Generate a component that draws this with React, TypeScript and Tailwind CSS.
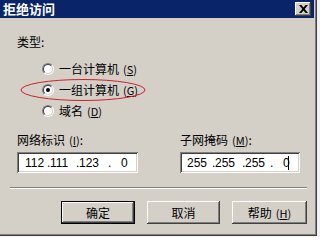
import React from 'react'

const cjk = "font-['SimSun','Noto_Sans_CJK_SC',sans-serif]"

function Radio({ checked }: { checked?: boolean }) {
  return (
    <div className="w-[12px] h-[12px] rounded-full border border-t-[#808080] border-l-[#808080] border-b-white border-r-white">
      <div className="w-full h-full rounded-full border border-t-[#404040] border-l-[#404040] border-b-[#d4d0c8] border-r-[#d4d0c8] bg-white flex items-center justify-center">
        {checked && <div className="w-[4px] h-[4px] rounded-full bg-black" />}
      </div>
    </div>
  )
}

function Accel({ ch }: { ch: string }) {
  return (
    <span className="ml-[4px] text-[11px]">
      (<span className="underline underline-offset-1">{ch}</span>)
    </span>
  )
}

function RadioRow({ label, ch, checked }: { label: string; ch: string; checked?: boolean }) {
  return (
    <div className="h-[21px] flex items-center gap-[5px]">
      <Radio checked={checked} />
      <span className="flex items-center">
        {label}
        <Accel ch={ch} />
      </span>
    </div>
  )
}

// each octet: [field width, text]
type Octet = [number, string]

function IpBox({ octets, pad, caret }: { octets: Octet[]; pad: number; caret?: boolean }) {
  return (
    <div
      className="h-[21px] bg-white flex items-center shadow-[inset_1px_1px_0_#808080,inset_-1px_-1px_0_#fff,inset_2px_2px_0_#404040,inset_-2px_-2px_0_#d4d0c8] font-['Liberation_Sans',sans-serif] text-[12px] text-black"
      style={{ paddingLeft: pad }}
    >
      {octets.map(([w, t], i) => (
        <React.Fragment key={i}>
          <span className="whitespace-pre" style={{ width: w }}>
            {t}
          </span>
          {i < octets.length - 1 && <span className="w-[3px]">.</span>}
        </React.Fragment>
      ))}
      {caret && <span className="w-px h-[14px] bg-black ml-[1px]" />}
    </div>
  )
}

function Btn({ children, isDefault }: { children: React.ReactNode; isDefault?: boolean }) {
  return (
    <button
      type="button"
      className={
        'h-[23px] flex items-center justify-center text-[12px] text-black ' +
        (isDefault
          ? 'border border-black shadow-[inset_-1px_-1px_0_#404040,inset_1px_1px_0_#fff,inset_-2px_-2px_0_#808080]'
          : 'shadow-[inset_-1px_-1px_0_#404040,inset_1px_1px_0_#fff,inset_-2px_-2px_0_#808080,inset_2px_2px_0_#d4d0c8]')
      }
    >
      {children}
    </button>
  )
}

export default function App() {
  return (
    <div className={`w-[320px] h-[237px] bg-[#f2f2f2] ${cjk} text-[12px] leading-[14px] text-black`}>
      <div className="relative w-[317px] h-[236px] bg-[#d4d0c8] shadow-[inset_-1px_-1px_0_#404040,inset_-2px_-2px_0_#808080] pr-[3px]">
        {/* title bar */}
        <div className="h-[18px] bg-[#0a246a] flex items-center justify-between pl-[3px] pr-[3px]">
          <span className="text-white font-bold text-[13px] leading-[18px]">拒绝访问</span>
          <div className="w-[16px] h-[14px] bg-[#d4d0c8] flex items-center justify-center shadow-[inset_-1px_-1px_0_#404040,inset_1px_1px_0_#fff,inset_-2px_-2px_0_#808080]">
            <svg width="9" height="8" viewBox="0 0 9 8">
              <path d="M0 0h2.4l2.1 2.6L6.6 0H9L5.7 4 9 8H6.6L4.5 5.4 2.4 8H0l3.3-4z" fill="#000" />
            </svg>
          </div>
        </div>

        <div className="pt-[17px] pl-[17px]">
          <div>类型:</div>
          <div className="pl-[25px] mt-[9px]">
            <RadioRow label="一台计算机" ch="S" />
            <RadioRow label="一组计算机" ch="G" checked />
            <RadioRow label="域名" ch="D" />
          </div>

          <div className="flex gap-[42px] mt-[12px]">
            <div className="w-[121px]">
              <div className="flex items-center">
                网络标识<Accel ch="I" />:
              </div>
              <div className="mt-[5px]">
                <IpBox
                  pad={8}
                  octets={[
                    [22, '112'],
                    [26, '111'],
                    [29, '123'],
                    [12, '   0'],
                  ]}
                />
              </div>
            </div>
            <div className="w-[120px]">
              <div className="flex items-center">
                子网掩码<Accel ch="M" />:
              </div>
              <div className="mt-[5px]">
                <IpBox
                  pad={7}
                  caret
                  octets={[
                    [25, '255'],
                    [27, '255'],
                    [25, '255'],
                    [14, '   0'],
                  ]}
                />
              </div>
            </div>
          </div>
        </div>

        <div className="ml-[10px] mr-[7px] mt-[14px] border-t border-t-[#808080] border-b border-b-white" />

        <div className="flex gap-[12px] pl-[61px] mt-[12px]">
          <div className="w-[74px] flex flex-col">
            <Btn isDefault>确定</Btn>
          </div>
          <div className="w-[73px] flex flex-col">
            <Btn>取消</Btn>
          </div>
          <div className="w-[75px] flex flex-col">
            <Btn>
              帮助<Accel ch="H" />
            </Btn>
          </div>
        </div>

        {/* red highlight ellipse */}
        <svg className="absolute left-0 top-0 pointer-events-none" width="317" height="236">
          <ellipse cx="83" cy="90" rx="62" ry="10.5" fill="none" stroke="#d0202a" strokeWidth="1" />
        </svg>
      </div>
    </div>
  )
}
